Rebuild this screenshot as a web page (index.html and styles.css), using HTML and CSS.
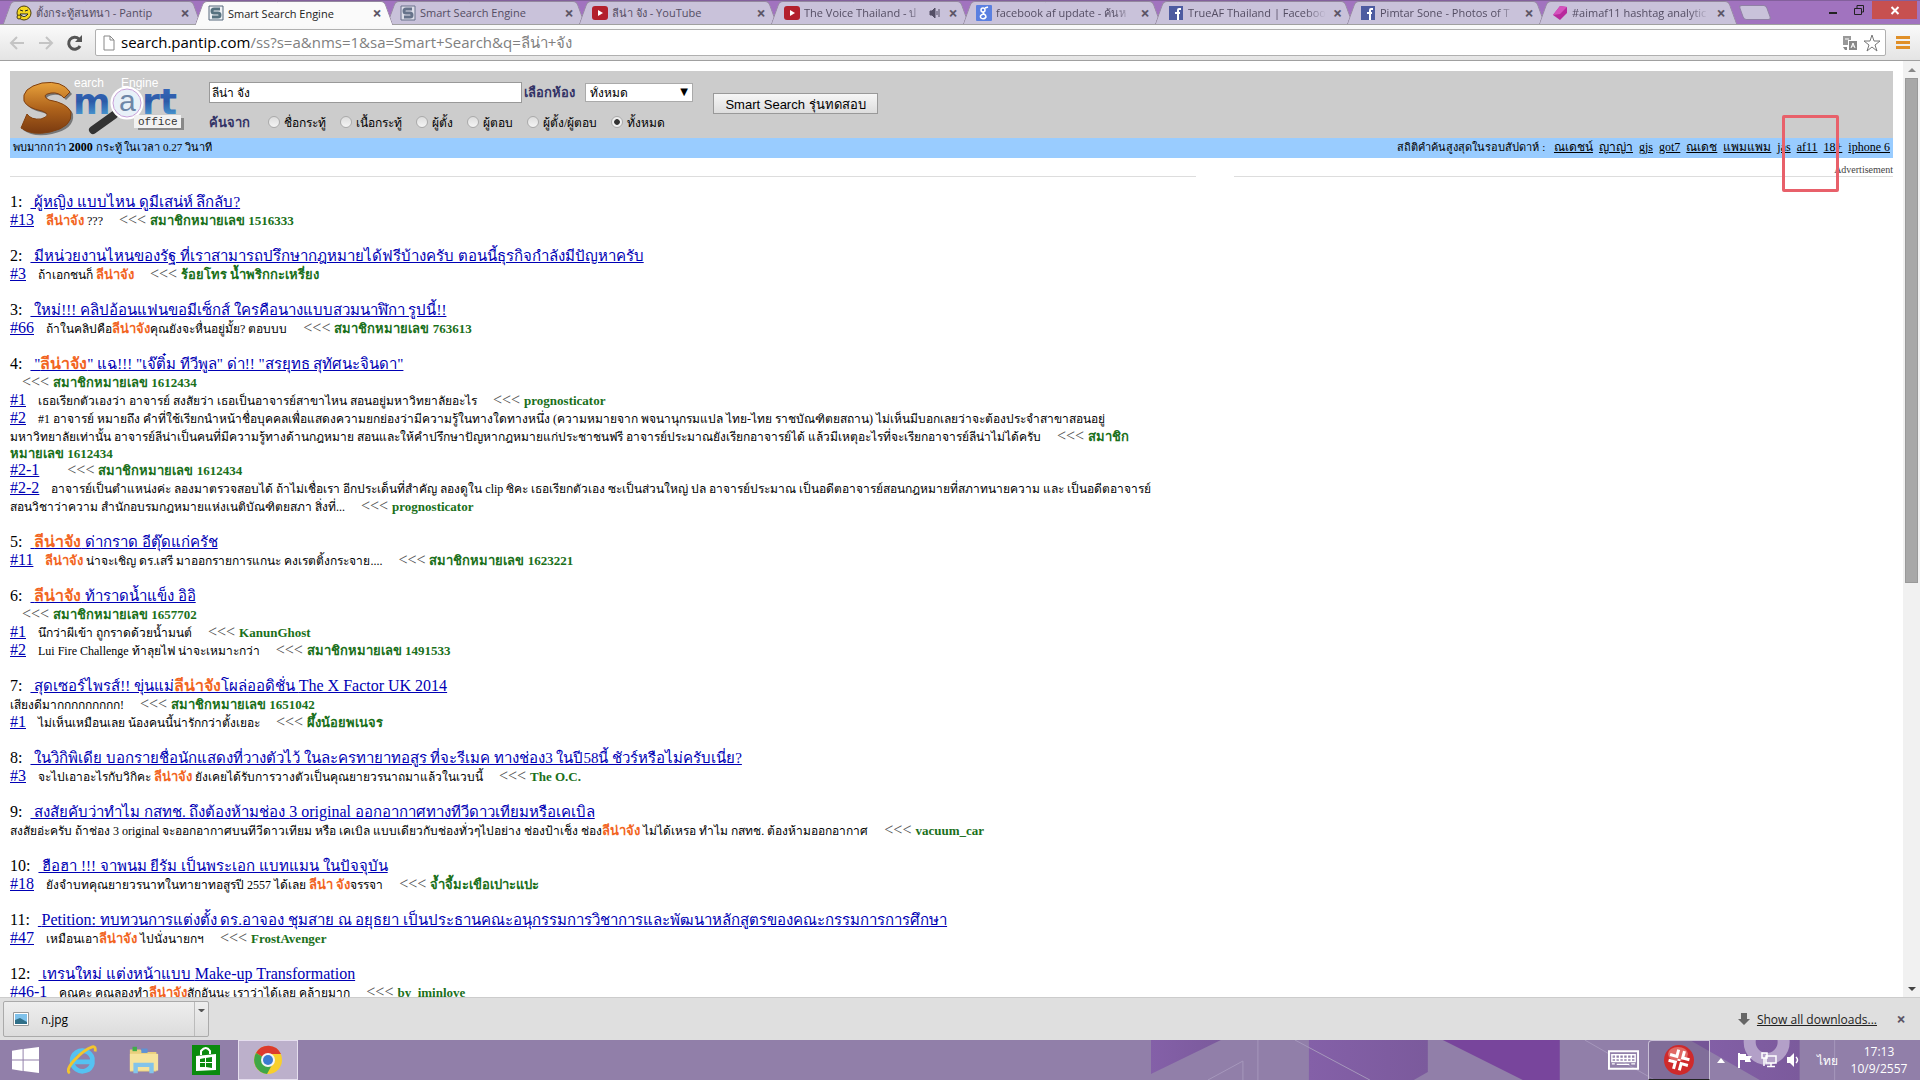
FILE: index.html
```html
<!DOCTYPE html>
<html lang="th">
<head>
  <meta charset="UTF-8">
  <meta name="viewport" content="width=device-width, initial-scale=1.0">
  <title>Smart Search Engine</title>
  <link rel="stylesheet" href="styles.css">
</head>
<body>
  <!-- tabs -->
  <header class="tabstrip">
    <div class="tab">
      <svg class="fav" viewBox="0 0 16 16"><circle cx="8" cy="8" r="7" fill="#f5d820" stroke="#4a3d10"/><path d="M4 5l3 1M9 6l3-1M4 9q4 5 8 0z" stroke="#222" fill="#fff"/><circle cx="3" cy="12" r="2" fill="#f5d820" stroke="#4a3d10"/></svg>
      <span class="label">ตั้งกระทู้สนทนา - Pantip</span><button class="x">×</button>
    </div>
    <div class="tab active">
      <svg class="fav" viewBox="0 0 16 16"><path d="M1 1h14v14H1z" fill="#eef1f4" stroke="#56697c"/><path d="M12 4H6Q4 4 4 6t2 2h4q2 0 2 2t-2 2H4" fill="none" stroke="#56717f" stroke-width="3"/></svg>
      <span class="label">Smart Search Engine</span><button class="x">×</button>
    </div>
    <div class="tab">
      <svg class="fav" viewBox="0 0 16 16"><path d="M1 1h14v14H1z" fill="#dcdde8" stroke="#68718a"/><path d="M12 4H6Q4 4 4 6t2 2h4q2 0 2 2t-2 2H4" fill="none" stroke="#66738a" stroke-width="3"/></svg>
      <span class="label">Smart Search Engine</span><button class="x">×</button>
    </div>
    <div class="tab">
      <svg class="fav" viewBox="0 0 16 16"><rect y="1" width="16" height="14" rx="3" fill="#b3202c"/><path d="M6 5l5 3-5 3z" fill="#fff"/></svg>
      <span class="label">ลีน่า จัง - YouTube</span><button class="x">×</button>
    </div>
    <div class="tab">
      <svg class="fav" viewBox="0 0 16 16"><rect y="1" width="16" height="14" rx="3" fill="#b3202c"/><path d="M6 5l5 3-5 3z" fill="#fff"/></svg>
      <span class="label fade">The Voice Thailand - ป</span>
      <svg class="sound" viewBox="0 0 12 12"><path d="M1 4h2l3-3v10L3 8H1zM8 4v4M10 2v8" fill="#554f66" stroke="#554f66"/></svg><button class="x">×</button>
    </div>
    <div class="tab">
      <svg class="fav" viewBox="0 0 16 16"><rect width="16" height="16" rx="1" fill="#5a7fe0"/><circle cx="7" cy="5" r="2" fill="none" stroke="#fff" stroke-width="1.5"/><path d="M9 3l3-1M8 7q-2 1 0 2t2 3q-2 3-5 1-2-3 3-4" fill="none" stroke="#fff" stroke-width="1.5"/></svg>
      <span class="label fade">facebook af update - ค้นห</span><button class="x">×</button>
    </div>
    <div class="tab">
      <svg class="fav" viewBox="0 0 16 16"><path d="M1 1h14v14H1z" fill="#4d5ba0"/><path d="M13 4h-2q-1 0-1 1v10M7 8h5" fill="none" stroke="#fff" stroke-width="2"/></svg>
      <span class="label fade">TrueAF Thailand | Faceboo</span><button class="x">×</button>
    </div>
    <div class="tab">
      <svg class="fav" viewBox="0 0 16 16"><path d="M1 1h14v14H1z" fill="#4d5ba0"/><path d="M13 4h-2q-1 0-1 1v10M7 8h5" fill="none" stroke="#fff" stroke-width="2"/></svg>
      <span class="label fade">Pimtar Sone - Photos of T</span><button class="x">×</button>
    </div>
    <div class="tab">
      <svg class="fav" viewBox="0 0 16 16"><path d="M8 1l7 1v6l-7 7-7-5z" fill="#b82a9c"/><path d="M8 1l7 1-7 7-7 1z" fill="#d453bd"/></svg>
      <span class="label fade">#aimaf11 hashtag analytic</span><button class="x">×</button>
    </div>
    <button class="newtab" aria-label="New tab"></button>
    <div class="winbtns">
      <button class="wbtn" aria-label="Minimize"><svg viewBox="0 0 12 12"><path d="M2 9h8" stroke="#222" stroke-width="2"/></svg></button>
      <button class="wbtn" aria-label="Restore"><svg viewBox="0 0 12 12"><path d="M1.500 4.500h7v6h-7zM4 4V1.500h6.500V8H9" fill="none" stroke="#222"/></svg></button>
      <button class="wbtn close" aria-label="Close"><svg viewBox="0 0 12 12"><path d="M2.500 3l7 7m0-7l-7 7" stroke="#fff" stroke-width="2"/></svg></button>
    </div>
  </header>

  <!-- address bar -->
  <div class="toolbar">
    <button class="nav" aria-label="Back"><svg viewBox="0 0 18 18"><path d="M16 9H3m6-6L3 9l6 6" fill="none" stroke="#c4c4c4" stroke-width="2"/></svg></button>
    <button class="nav" aria-label="Forward"><svg viewBox="0 0 18 18"><path d="M2 9h13M9 3l6 6-6 6" fill="none" stroke="#c4c4c4" stroke-width="2"/></svg></button>
    <button class="nav" aria-label="Reload"><svg viewBox="0 0 18 18"><path d="M14 12a6 6 0 1 1-1-7" fill="none" stroke="#555" stroke-width="3"/><path d="M16 1v7H9z" fill="#555"/></svg></button>
    <div class="omnibox">
      <svg class="page-icon" viewBox="0 0 12 16"><path d="M1 1h6l4 4v10H1zM7 1v4h4" fill="#fff" stroke="#888"/></svg>
      <span class="url"><b>search.pantip.com</b>/ss?s=a&amp;nms=1&amp;sa=Smart+Search&amp;q=ลีน่า+จัง</span>
      <svg class="tr" viewBox="0 0 14 14"><path d="M0 0h8v4H5v5H0z" fill="#999"/><path d="M6 5h8v9H6zM0 11h4v3H2z" fill="#888"/><path d="M8 12l2-5 2 5M9 10h2M2 3h4" stroke="#fff" fill="none"/></svg>
      <svg class="star" viewBox="0 0 18 18"><path d="M9 1l2 6h6l-5 4 2 6-5-4-5 4 2-6-5-4h6z" fill="#fff" stroke="#777"/></svg>
    </div>
    <button class="menu" aria-label="Menu"><i></i><i></i><i></i></button>
  </div>

  <div class="viewport">
    <main class="page">
      <form class="search">
        <svg class="logo" viewBox="0 0 170 60">
          <defs>
            <linearGradient id="gold" x1="0" y1="0" x2="0" y2="1"><stop offset="0" stop-color="#e8a23c"/><stop offset=".5" stop-color="#b0641c"/><stop offset="1" stop-color="#7a3a10"/></linearGradient>
            <linearGradient id="blue" x1="0" y1="0" x2="0" y2="1"><stop offset="0" stop-color="#3a6cc0"/><stop offset=".5" stop-color="#2b5aa8"/><stop offset="1" stop-color="#58b4e4"/></linearGradient>
          </defs>
          <path d="M53 14Q45 2 25 5Q4 10 7 23Q10 30 25 33Q36 37 24 41Q14 42 10 36L4 50Q15 58 33 54Q56 49 54 34Q50 25 32 22Q23 17 34 15Q42 14 47 20z" fill="#777" transform="translate(2 2)"/>
          <path d="M53 14Q45 2 25 5Q4 10 7 23Q10 30 25 33Q36 37 24 41Q14 42 10 36L4 50Q15 58 33 54Q56 49 54 34Q50 25 32 22Q23 17 34 15Q42 14 47 20z" fill="url(#gold)" stroke="#81400f"/>
          <text x="56" y="36" class="logo-word" fill="url(#blue)">m</text>
          <text x="125" y="36" class="logo-word" fill="url(#blue)">rt</text>
          <path d="M97 37L76 52" stroke="#333" stroke-width="8" stroke-linecap="round"/>
          <circle cx="110" cy="25" r="15" fill="#e8f1f8" stroke="#fff" stroke-width="3"/>
          <circle cx="110" cy="25" r="14" fill="none" stroke="#c5a0d8"/>
          <text x="102" y="33" class="logo-a">a</text>
          <text x="57" y="9" class="logo-top">earch</text><text x="104" y="9" class="logo-top">Engine</text>
          <path d="M121 40h46v12h-46z" fill="#888"/><path d="M117 37h47v13h-47z" fill="#f2f2f2"/>
          <text x="121" y="47" class="logo-office">office</text>
        </svg>
        <div class="fields">
          <div class="row">
            <input type="text" class="q" value="ลีน่า จัง" aria-label="คำค้น">
            <label for="room" class="cap">เลือกห้อง</label>
            <div class="room"><select id="room"><option>ทั้งหมด</option></select></div>
          </div>
          <div class="row radios">
            <span class="cap from">ค้นจาก</span>
            <label><input type="radio" name="from">ชื่อกระทู้</label>
            <label><input type="radio" name="from">เนื้อกระทู้</label>
            <label><input type="radio" name="from">ผู้ตั้ง</label>
            <label><input type="radio" name="from">ผู้ตอบ</label>
            <label><input type="radio" name="from">ผู้ตั้ง/ผู้ตอบ</label>
            <label><input type="radio" name="from" checked>ทั้งหมด</label>
          </div>
        </div>
        <button type="button" class="go">Smart Search รุ่นทดสอบ</button>
      </form>
      <div class="stats">
        <span>พบมากกว่า <b>2000</b> กระทู้ ในเวลา 0.27 วินาที</span>
        <nav class="top">สถิติคำค้นสูงสุดในรอบสัปดาห์ : <a href="#">ณเดชน์</a><a href="#">ญาญ่า</a><a href="#">gjs</a><a href="#">got7</a><a href="#">ณเดช</a><a href="#">แพมแพม</a><a href="#">jas</a><a href="#">af11</a><a href="#">18+</a><a href="#">iphone 6</a></nav>
        <div class="mark"></div>
      </div>

      <div class="columns">
        <section class="results">
          <div class="item">
            <h3>1: <a href="#">&nbsp;ผู้หญิง แบบไหน ดูมีเสน่ห์ ลึกลับ?</a></h3>
            <p><a href="#">#13</a><span><em>ลีน่าจัง</em> ???</span><i>&lt;&lt;&lt;</i> <b>สมาชิกหมายเลข 1516333</b></p>
          </div>
          <div class="item">
            <h3>2: <a href="#">&nbsp;มีหน่วยงานไหนของรัฐ ที่เราสามารถปรึกษากฎหมายได้ฟรีบ้างครับ ตอนนี้ธุรกิจกำลังมีปัญหาครับ</a></h3>
            <p><a href="#">#3</a><span>ถ้าเอกชนก็ <em>ลีน่าจัง</em></span><i>&lt;&lt;&lt;</i> <b>ร้อยโทร น้ำพริกกะเหรี่ยง</b></p>
          </div>
          <div class="item">
            <h3>3: <a href="#">&nbsp;ใหม่!!! คลิปอ้อนแฟนขอมีเซ็กส์ ใครคือนางแบบสวมนาฬิกา รูปนี้!!</a></h3>
            <p><a href="#">#66</a><span>ถ้าในคลิปคือ<em>ลีน่าจัง</em>คุณยังจะหื่นอยู่มั้ย? ตอบบบ</span><i>&lt;&lt;&lt;</i> <b>สมาชิกหมายเลข 763613</b></p>
          </div>
          <div class="item">
            <h3>4: <a href="#">&nbsp;"<em>ลีน่าจัง</em>" แฉ!!! "เจ๊ติ๋ม ทีวีพูล" ด่า!! "สรยุทธ สุทัศนะจินดา"</a></h3>
            <p class="op"><i>&lt;&lt;&lt;</i> <b>สมาชิกหมายเลข 1612434</b></p>
            <p><a href="#">#1</a><span>เธอเรียกตัวเองว่า อาจารย์ สงสัยว่า เธอเป็นอาจารย์สาขาไหน สอนอยู่มหาวิทยาลัยอะไร</span><i>&lt;&lt;&lt;</i> <b>prognosticator</b></p>
            <p><a href="#">#2</a><span>#1 อาจารย์ หมายถึง คำที่ใช้เรียกนำหน้าชื่อบุคคลเพื่อแสดงความยกย่องว่ามีความรู้ในทางใดทางหนึ่ง (ความหมายจาก พจนานุกรมแปล ไทย-ไทย ราชบัณฑิตยสถาน) ไม่เห็นมีบอกเลยว่าจะต้องประจำสาขาสอนอยู่<br>มหาวิทยาลัยเท่านั้น อาจารย์ลีน่าเป็นคนที่มีความรู้ทางด้านกฎหมาย สอนและให้คำปรึกษาปัญหากฎหมายแก่ประชาชนฟรี อาจารย์ประมาณยังเรียกอาจารย์ได้ แล้วมีเหตุอะไรที่จะเรียกอาจารย์ลีน่าไม่ได้ครับ</span><i>&lt;&lt;&lt;</i> <b>สมาชิก</b></p>
            <p class="tail"><b>หมายเลข 1612434</b></p>
            <p><a href="#">#2-1</a><span></span><i>&lt;&lt;&lt;</i> <b>สมาชิกหมายเลข 1612434</b></p>
            <p><a href="#">#2-2</a><span>อาจารย์เป็นตำแหน่งค่ะ ลองมาตรวจสอบได้ ถ้าไม่เชื่อเรา อีกประเด็นที่สำคัญ ลองดูใน clip ซิคะ เธอเรียกตัวเอง ซะเป็นส่วนใหญ่ ปล อาจารย์ประมาณ เป็นอดีตอาจารย์สอนกฎหมายที่สภาทนายความ และ เป็นอดีตอาจารย์<br>สอนวิชาว่าความ สำนักอบรมกฎหมายแห่งเนติบัณฑิตยสภา สิ่งที่...</span><i>&lt;&lt;&lt;</i> <b>prognosticator</b></p>
          </div>
          <div class="item">
            <h3>5: <a href="#">&nbsp;<em>ลีน่าจัง</em> ด่ากราด อีตุ๊ดแก่ครัช</a></h3>
            <p><a href="#">#11</a><span><em>ลีน่าจัง</em> น่าจะเชิญ ดร.เสรี มาออกรายการแกนะ คงเรตติ้งกระจาย....</span><i>&lt;&lt;&lt;</i> <b>สมาชิกหมายเลข 1623221</b></p>
          </div>
          <div class="item">
            <h3>6: <a href="#">&nbsp;<em>ลีน่าจัง</em> ท้าราดน้ำแข็ง อิอิ</a></h3>
            <p class="op"><i>&lt;&lt;&lt;</i> <b>สมาชิกหมายเลข 1657702</b></p>
            <p><a href="#">#1</a><span>นึกว่าผีเข้า ถูกราดด้วยน้ำมนต์</span><i>&lt;&lt;&lt;</i> <b>KanunGhost</b></p>
            <p><a href="#">#2</a><span>Lui Fire Challenge ท้าลุยไฟ น่าจะเหมาะกว่า</span><i>&lt;&lt;&lt;</i> <b>สมาชิกหมายเลข 1491533</b></p>
          </div>
          <div class="item">
            <h3>7: <a href="#">&nbsp;สุดเซอร์ไพรส์!! ขุ่นแม่<em>ลีน่าจัง</em>โผล่ออดิชั่น <span lang="en">The X Factor UK 2014</span></a></h3>
            <p><span class="first">เสียงดีมากกกกกกกกก!</span><i>&lt;&lt;&lt;</i> <b>สมาชิกหมายเลข 1651042</b></p>
            <p><a href="#">#1</a><span>ไม่เห็นเหมือนเลย น้องคนนี้น่ารักกว่าตั้งเยอะ</span><i>&lt;&lt;&lt;</i> <b>ผึ้งน้อยพเนจร</b></p>
          </div>
          <div class="item">
            <h3>8: <a href="#">&nbsp;ในวิกิพิเดีย บอกรายชื่อนักแสดงที่วางตัวไว้ ในละครทายาทอสูร ที่จะรีเมค ทางช่อง3 ในปี58นี้ ชัวร์หรือไม่ครับเนี่ย?</a></h3>
            <p><a href="#">#3</a><span>จะไปเอาอะไรกับวิกิคะ <em>ลีน่าจัง</em> ยังเคยได้รับการวางตัวเป็นคุณยายวรนาถมาแล้วในเวบนี้</span><i>&lt;&lt;&lt;</i> <b>The O.C.</b></p>
          </div>
          <div class="item">
            <h3>9: <a href="#">&nbsp;สงสัยคับว่าทำไม กสทช. ถึงต้องห้ามช่อง <span lang="en">3 original</span> ออกอากาศทางทีวีดาวเทียมหรือเคเบิล</a></h3>
            <p><span class="first">สงสัยอ่ะครับ ถ้าช่อง 3 original จะออกอากาศบนทีวีดาวเทียม หรือ เคเบิล แบบเดียวกับช่องทั่วๆไปอย่าง ช่องป้าเช็ง ช่อง<em>ลีน่าจัง</em> ไม่ได้เหรอ ทำไม กสทช. ต้องห้ามออกอากาศ</span><i>&lt;&lt;&lt;</i> <b>vacuum_car</b></p>
          </div>
          <div class="item">
            <h3>10: <a href="#">&nbsp;ฮือฮา !!! จาพนม ยีรัม เป็นพระเอก แบทแมน ในปัจจุบัน</a></h3>
            <p><a href="#">#18</a><span>ยังจำบทคุณยายวรนาทในทายาทอสูรปี 2557 ได้เลย <em>ลีน่า จัง</em>จรรจา</span><i>&lt;&lt;&lt;</i> <b>จ้ำจี้มะเขือเปาะแปะ</b></p>
          </div>
          <div class="item">
            <h3>11: <a href="#">&nbsp;<span lang="en">Petition:</span> ทบทวนการแต่งตั้ง ดร.อาจอง ชุมสาย ณ อยุธยา เป็นประธานคณะอนุกรรมการวิชาการและพัฒนาหลักสูตรของคณะกรรมการการศึกษา</a></h3>
            <p><a href="#">#47</a><span>เหมือนเอา<em>ลีน่าจัง</em> ไปนั่งนายกฯ</span><i>&lt;&lt;&lt;</i> <b>FrostAvenger</b></p>
          </div>
          <div class="item">
            <h3>12: <a href="#">&nbsp;เทรนใหม่ แต่งหน้าแบบ <span lang="en">Make-up Transformation</span></a></h3>
            <p><a href="#">#46-1</a><span>คุณคะ คุณลองทำ<em>ลีน่าจัง</em>สักอันนะ เราว่าได้เลย คล้ายมาก</span><i>&lt;&lt;&lt;</i> <b>by_iminlove</b></p>
          </div>
        </section>
        <aside class="ad">Advertisement</aside>
      </div>
    </main>
    <div class="scrollbar"><span class="up"></span><div class="thumb"></div><span class="down"></span></div>
  </div>

  <!-- downloads -->
  <div class="downloads">
    <div class="file">
      <button class="open"><svg viewBox="0 0 16 14"><path d="M.5.500h15v13H.5z" fill="#fff" stroke="#999"/><path d="M2 2h12v10H2z" fill="#7fc1ea"/><path d="M2 8l5-2 7 4v2H2z" fill="#2f6f88"/></svg>ก.jpg</button>
      <button class="drop" aria-label="Options"></button>
    </div>
    <div class="all">
      <svg viewBox="0 0 12 14"><path d="M3 1h6v6h3l-6 6-6-6h3z" fill="#666"/></svg>
      <a href="#">Show all downloads...</a>
      <button class="x">×</button>
    </div>
  </div>

  <footer class="taskbar">
    <svg class="wall" viewBox="-6 0 826 40" preserveAspectRatio="none">
      <defs><linearGradient id="pu"><stop offset="0" stop-color="#8460a8"/><stop offset="1" stop-color="#7b5a9c"/></linearGradient></defs>
      <path d="M51 0h70L51 34z" fill="url(#pu)"/>
      <path d="M209 0h119v32l-14 8H209z" fill="url(#pu)"/>
      <path d="M343 0h117v40h-37z" fill="#78459c"/>
      <path d="M590 0h110v40h-40z" fill="url(#pu)"/>
      <circle cx="667" cy="2" r="17" fill="none" stroke="#b3a0c8" stroke-width="12"/>
      <path d="M158 0v40M195 0l75 40M108 40l35-19v19M485 0l70 40M735 0v40" fill="none" stroke="#a698bc"/>
    </svg>
    <button class="app" aria-label="Start"><svg viewBox="0 0 28 28"><path d="M0 4l11-2v11H0zM12 2l16-2v13H12zM0 14h11v11L0 23zM12 14h16v13l-16-2z" fill="#fff"/></svg></button>
    <button class="app" aria-label="Internet Explorer"><svg viewBox="0 0 32 32"><path d="M27 20A11 11 0 1 1 27 14V18H8" fill="none" stroke="#55c2f2" stroke-width="5"/><path d="M3 30Q-2 27 8 16T27 2q4-1 3 5" fill="none" stroke="#f3c52e" stroke-width="3"/></svg></button>
    <button class="app" aria-label="File Explorer"><svg viewBox="0 0 34 32"><path d="M1 4h12l3 3h15v22H1z" fill="#e9cf7c"/><path d="M4 1h5v5H4z" fill="#3fae49"/><path d="M14 3h7v5h-7z" fill="#5d93d6"/><path d="M1 9h32v19H1z" fill="#f6e39d"/><path d="M5 31V19h23v12h-5v-7H10v7z" fill="#83c4ea"/></svg></button>
    <button class="app" aria-label="Store"><svg viewBox="0 0 28 30"><path d="M0 0h28v30H0z" fill="#0b8a0e"/><path d="M4 11l20-2v16l-20 1z" fill="#fff"/><path d="M9 10V6q5-6 9 0v3" fill="none" stroke="#fff" stroke-width="2"/><path d="M8 14l5-1v4H8zM14 13l6-1v5h-6zM8 18h5v4H8zM14 18h6v5l-6-1z" fill="#0b8a0e"/></svg></button>
    <button class="app running" aria-label="Chrome"><svg viewBox="0 0 30 30"><circle cx="15" cy="15" r="14" fill="#f8cf2c"/><path d="M15 15L3 8A14 14 0 0 1 28 9H15z" fill="#dc3a2d"/><path d="M15 15L3 8A14 14 0 0 0 14 29l6-11z" fill="#3fa648"/><circle cx="15" cy="15" r="7" fill="#f4f4f4"/><circle cx="15" cy="15" r="5" fill="#3b7bd0"/></svg></button>
    <div class="tray">
      <svg class="kb" viewBox="0 0 32 20"><path d="M1 1h30v18H1z" fill="none" stroke="#fff" stroke-width="2"/><path d="M4 4.500h24v4H4zM4 8.500h24v3H4zM4 14h3M9 14.500h13M24 14h4M8 4v8M12 4v8M16 4v8M20 4v8M24 4v8" fill="none" stroke="#fff" stroke-width="1.500"/></svg>
      <button class="red" aria-label="Recorder"><svg viewBox="0 0 32 32"><circle cx="16" cy="16" r="15" fill="#cf2a2c"/><ellipse cx="15" cy="10" rx="10" ry="7" fill="#e06a66"/><g transform="rotate(15 16 16)"><path d="M13 6v7H6M19 6v7h7M6 19h7v7M26 19h-7v7M16 15v2" fill="none" stroke="#fff" stroke-width="3"/></g></svg></button>
      <svg class="arrow" viewBox="0 0 10 6"><path d="M1 6l4-5 4 5z" fill="#fff"/></svg>
      <svg class="ti" viewBox="0 0 16 16"><path d="M2 1v15" stroke="#fff" stroke-width="2"/><path d="M3 2h6v2h6l-2 3 1 3H8V8H3z" fill="#fff"/></svg>
      <svg class="ti" viewBox="0 0 16 16"><path d="M5 4h10v7H5zM10 11v3M6 14.500h8M1 1h5v5H1zM3 6v8" fill="none" stroke="#fff" stroke-width="1.500"/></svg>
      <svg class="ti" viewBox="0 0 16 16"><path d="M2 5h3l4-4v14l-4-4H2z" fill="#fff"/><path d="M11 5q3 3 0 6" fill="none" stroke="#fff" stroke-width="1.500"/></svg>
      <span class="lang">ไทย</span>
      <div class="clock"><span>17:13</span><span>10/9/2557</span></div>
    </div>
  </footer>
</body>
</html>
```

FILE: styles.css
```css
* {
  box-sizing: border-box;
}
body {
  margin: 0;
  height: 100vh;
  display: flex;
  flex-direction: column;
  overflow: hidden;
  font-family: "Liberation Serif", serif;
  font-size: 16px;
  background: #fff;
}
button {
  border: none;
  background: none;
  padding: 0;
  font-family: inherit;
}
svg {
  display: block;
  flex: none;
}

/* tab strip */
.tabstrip {
  display: flex;
  height: 25px;
  padding-left: 3px;
  background: #a173bf;
  border-top: 1px solid #83609c;
  border-bottom: 1px solid #a0a0a0;
  font-family: "Open Sans", "Noto Sans", sans-serif;
  font-size: 11px;
  color: #544d63;
}
.tab {
  position: relative;
  flex: 0 1 192px;
  min-width: 0;
  display: flex;
  align-items: center;
  gap: 4px;
  padding: 0 2px 0 13px;
  isolation: isolate;
}
.tab::before,
.tab::after {
  content: "";
  position: absolute;
  z-index: -1;
  top: 0;
  bottom: 0;
  background: #c9c2da;
  border-top: 1px solid #94889f;
}
.tab::before {
  left: 4px;
  right: 50%;
  transform: skewX(-20deg);
  border-left: 1px solid #94889f;
  border-top-left-radius: 4px;
}
.tab::after {
  left: 45%;
  right: -2px;
  transform: skewX(20deg);
  border-right: 1px solid #94889f;
  border-top-right-radius: 4px;
}
.tab.active {
  z-index: 1;
  margin-bottom: -1px;
  color: #222;
}
.tab.active::before,
.tab.active::after {
  background: #fafafa;
}
.fav {
  width: 16px;
  height: 16px;
}
.label {
  flex: 1;
  white-space: nowrap;
}
.fade {
  -webkit-mask-image: linear-gradient(90deg, #000 85%, transparent);
  mask-image: linear-gradient(90deg, #000 85%, transparent);
}
.sound {
  width: 12px;
  height: 12px;
}
.x {
  width: 16px;
  font-size: 16px;
  font-weight: bold;
  line-height: 16px;
  color: #5c5566;
}
.newtab {
  width: 28px;
  height: 15px;
  margin: 4px 0 0 10px;
  background: #c9c2da;
  border: 1px solid #9080a5;
  border-radius: 3px;
  transform: skewX(20deg);
}
.winbtns {
  display: flex;
  margin: 0 3px 0 auto;
}
.wbtn {
  width: 26px;
  height: 18px;
  display: flex;
  align-items: center;
  justify-content: center;
}
.wbtn svg {
  width: 12px;
  height: 12px;
}
.wbtn.close {
  width: 45px;
  background: #c75050;
}

/* toolbar */
.toolbar {
  display: flex;
  align-items: center;
  height: 36px;
  padding: 0 8px;
  background: linear-gradient(#fafafa, #e4e4e4);
  border-bottom: 1px solid #a0a0a0;
}
.nav {
  width: 29px;
}
.nav svg {
  width: 18px;
  height: 18px;
}
.omnibox {
  flex: 1;
  display: flex;
  align-items: center;
  height: 27px;
  margin-right: 10px;
  padding: 0 4px 0 7px;
  background: #fff;
  border: 1px solid #b0b0b0;
  border-radius: 2px;
  font-family: "Open Sans", "Noto Sans", sans-serif;
  font-size: 15px;
  color: #808080;
}
.url {
  flex: 1;
  margin-left: 6px;
  white-space: nowrap;
}
.url b {
  font-weight: normal;
  color: #000;
}
.page-icon {
  width: 12px;
  height: 16px;
}
.tr {
  width: 14px;
  height: 14px;
  margin-right: 6px;
}
.star {
  width: 18px;
  height: 18px;
}
.menu {
  width: 16px;
}
.menu i {
  display: block;
  height: 3px;
  margin: 2px 0;
  width: 14px;
  background: #e08f27;
}

/* page */
.viewport {
  flex: 1;
  min-height: 0;
  display: flex;
}
.page {
  flex: 1;
  min-width: 0;
  overflow: hidden;
  padding: 10px;
}
.search {
  display: flex;
  height: 67px;
  background: #ccc;
}
.logo {
  width: 170px;
  height: 60px;
  margin: 7px 22px 0 7px;
}
.logo-word {
  font: bold 36px "DejaVu Sans", sans-serif;
}
.logo-a {
  font: 30px "Liberation Sans", sans-serif;
  fill: #6d87a8;
}
.logo-top {
  font: 12px "Liberation Sans", sans-serif;
  fill: #fff;
}
.logo-office {
  font: 11px "Liberation Mono", monospace;
  fill: #333;
}
.fields {
  padding-top: 11px;
}
.row {
  display: flex;
  align-items: center;
  height: 21px;
  font-size: 13px;
}
.q {
  width: 313px;
  height: 21px;
  padding: 1px 2px;
  border: 1px solid #999;
  font: 12px "Liberation Sans", sans-serif;
}
.cap {
  margin-left: 2px;
  width: 61px;
  font-weight: bold;
  color: #336;
}
.room {
  position: relative;
}
.room::after {
  content: "▼";
  position: absolute;
  right: 5px;
  top: 4px;
  font: 10px/10px "DejaVu Sans", sans-serif;
  pointer-events: none;
}
#room {
  width: 108px;
  height: 19px;
  padding: 0 4px;
  border: 1px solid #aaa;
  background: #fff;
  appearance: none;
  font: 12px "Liberation Sans", sans-serif;
}
.radios {
  margin-top: 9px;
  font-size: 12px;
}
.radios .from {
  margin: 0;
  width: 59px;
  font-size: 13px;
}
.radios label {
  display: flex;
  align-items: center;
  margin-right: 14px;
}
.radios input {
  appearance: none;
  width: 12px;
  height: 12px;
  margin: 0 4px 2px 0;
  border: 1px solid #aaa;
  border-radius: 50%;
  background: linear-gradient(#ddd, #f4f4f4);
}
.radios input:checked {
  background: radial-gradient(#333 35%, #eee 45%);
}
.go {
  width: 165px;
  height: 21px;
  margin: 22px 0 0 20px;
  border: 1px solid #999;
  background: linear-gradient(#f6f6f6, #ddd);
  font: 13px "Liberation Sans", sans-serif;
  white-space: nowrap;
}
.stats {
  position: relative;
  display: flex;
  justify-content: space-between;
  height: 20px;
  padding: 0 3px;
  background: #9cf;
  font-size: 11px;
  line-height: 18px;
}
.stats b {
  font-size: 12px;
}
.top a {
  margin-left: 6px;
  font-size: 12px;
  color: #000;
}
.mark {
  position: absolute;
  right: 54px;
  top: -23px;
  width: 57px;
  height: 77px;
  border: 3px solid #e8606a;
  border-radius: 2px;
}
.columns {
  display: flex;
  justify-content: space-between;
}
.results {
  width: 63%;
  margin-top: 18px;
  padding-top: 16px;
  border-top: 1px solid #ddd;
  white-space: nowrap;
}
.ad {
  width: 35%;
  height: 19px;
  padding-top: 6px;
  border-bottom: 1px solid #ddd;
  font-size: 10px;
  line-height: 12px;
  text-align: right;
  color: #444;
}
.item {
  margin-bottom: 18px;
}
.item h3,
.item p {
  margin: 0;
  font-size: 16px;
  font-weight: normal;
  line-height: 18px;
}
.item a {
  color: #0000b4;
}
.item h3 a {
  margin-left: 4px;
  font-size: 15px;
  line-height: 14px;
}
.item h3 em,
.item h3 span {
  font-size: 16px;
}
.item p span {
  margin: 0 16px 0 12px;
  font-size: 12px;
  line-height: 12px;
}
.item p .first {
  margin-left: 0;
}
.item em {
  font-style: normal;
  font-weight: bold;
  line-height: 12px;
  color: #f26522;
}
.item p em {
  font-size: 13px;
}
.item i {
  font-style: normal;
  line-height: 12px;
  color: #555;
}
.item p b {
  font-size: 13px;
  line-height: 12px;
  color: #1a701a;
}
.item .op {
  padding-left: 12px;
}
.item .tail {
  line-height: 16px;
}
.scrollbar {
  width: 17px;
  display: flex;
  flex-direction: column;
  align-items: center;
  background: #f1f1f1;
}
.up,
.down {
  height: 17px;
  padding-top: 7px;
}
.up::before,
.down::before {
  content: "";
  display: block;
  border: 4px solid transparent;
  border-top-width: 0;
  border-bottom-color: #888;
}
.down {
  margin-top: auto;
}
.down::before {
  border-top: 4px solid #444;
  border-bottom-width: 0;
}
.thumb {
  width: 13px;
  height: 54%;
  background: #a8a8a8;
  border: 1px solid #999;
}

/* downloads */
.downloads {
  display: flex;
  align-items: center;
  height: 43px;
  padding: 0 11px 0 3px;
  background: #dfdfdf;
  border-top: 1px solid #ccc;
  font-family: "Open Sans", "Noto Sans", sans-serif;
  font-size: 12px;
}
.file {
  display: flex;
  width: 206px;
  height: 36px;
  border: 1px solid #aaa;
  border-radius: 2px;
  background: linear-gradient(#eee, #dcdcdc);
}
.open {
  flex: 1;
  display: flex;
  align-items: center;
  gap: 12px;
  padding-left: 9px;
  font-size: 12px;
}
.open svg {
  width: 16px;
  height: 14px;
}
.drop {
  width: 14px;
  border-left: 1px solid #bbb;
}
.drop::before {
  content: "";
  display: block;
  margin: -10px 3px 0;
  border: 3px solid transparent;
  border-top-color: #555;
}
.all {
  display: flex;
  align-items: center;
  margin-left: auto;
}
.all svg {
  width: 12px;
  height: 14px;
  margin-right: 7px;
}
.all a {
  color: #222;
}
.all .x {
  margin-left: 16px;
}

/* taskbar */
.taskbar {
  position: relative;
  display: flex;
  height: 40px;
  background: #917fa9;
  color: #fff;
  font-family: "Open Sans", "Noto Sans", sans-serif;
  font-size: 12px;
}
.wall {
  position: absolute;
  right: 0;
  top: 0;
  width: 43%;
  height: 100%;
}
.app {
  display: flex;
  align-items: center;
  justify-content: center;
  width: 60px;
  height: 40px;
  margin-right: 2px;
}
.wall + .app {
  width: 50px;
}
.app svg {
  width: 30px;
  height: 30px;
}
.wall + .app svg {
  width: 27px;
  height: 27px;
}
.app.running {
  background: #bcb0cb;
  border: 1px solid #e5deee;
}
.tray {
  position: relative;
  display: flex;
  align-items: center;
  margin-left: auto;
}
.kb {
  width: 31px;
  height: 20px;
  margin-right: 9px;
}
.red {
  width: 62px;
  height: 40px;
  margin-right: 6px;
  display: flex;
  align-items: center;
  justify-content: center;
  background: rgba(60, 40, 90, 0.2);
  border: 1px solid #c9c0d6;
  border-bottom: 1px solid #222;
  border-radius: 4px 0 0 0;
}
.red svg {
  width: 32px;
  height: 32px;
}
.arrow {
  width: 10px;
  height: 6px;
  margin-right: 11px;
}
.ti {
  width: 16px;
  height: 16px;
  margin-right: 8px;
}
.lang {
  margin: 0 8px;
}
.clock {
  width: 66px;
  margin-right: 8px;
  text-align: center;
  line-height: 17px;
}
.clock span {
  display: block;
}
```
